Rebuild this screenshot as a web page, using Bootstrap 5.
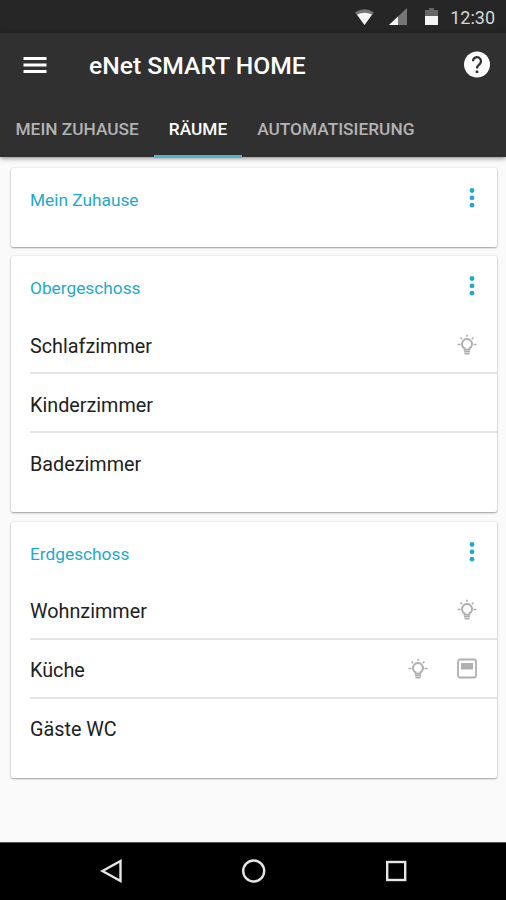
<!DOCTYPE html>
<html lang="de">
<head>
<meta charset="utf-8">
<meta name="viewport" content="width=device-width, initial-scale=1">
<title>eNet SMART HOME</title>
<link rel="stylesheet" href="https://cdn.jsdelivr.net/npm/bootstrap@5.3.0/dist/css/bootstrap.min.css">
<style>
body{font-family:Roboto,"Liberation Sans",sans-serif;background:#fafafa;height:900px;overflow:hidden;color:#212121}
svg{display:block;flex:none}
.status-bar{height:33px;background:#262626;padding-right:11px;color:#d6d6d6;font-size:18px;line-height:33px;padding-top:2px}
.app-head{background:#303030;height:124px;box-shadow:0 1px 5px rgba(0,0,0,.5);position:relative}
.tool-row{height:64px;padding:0 15px 0 23px}
.app-title{font-size:24.7px;font-weight:500;color:#fff;line-height:32px;margin-left:42px;padding-top:1px}
.tab-row{height:61px;padding-left:.5px}
.tab-row .nav-link{color:#b3b3b3;font-size:17.3px;font-weight:500;line-height:26px;padding:19px 15px 0;height:61px;border-bottom:3px solid transparent;white-space:nowrap}
.tab-row .nav-link.active{color:#fff;border-color:#4fb6cc}
.room-list{padding:11px 9px 0 10.5px;gap:9.4px}
.floor-card{border:0;border-radius:2px;background:#fff;box-shadow:0 1px 2px rgba(0,0,0,.35),0 0 2px rgba(0,0,0,.12);height:256px}
.floor-card.short{height:79px}
.floor-head{height:59px;padding:0 20px 0 19.5px}
.floor-name{font-size:17.3px;line-height:24px;color:#1eaac8;padding-top:20px}
.dots{margin-top:19px}
.room{height:59px;margin-left:19.5px;padding:5px 20px 0 0;font-size:19.8px;border-bottom:2px solid #e4e4e4}
.room:last-child{border:0;padding-top:4px}
.icons{gap:29px;margin-top:-3px}
.nav-keys{height:58px;background:#000;border-top:1px solid #555}
</style>
</head>
<body class="d-flex flex-column">
<svg width="0" height="0" class="position-absolute">
<symbol id="bulb" viewBox="0 0 20 22"><g fill="none" stroke="#b0b0b0"><path d="M7.600 15.800V14.400a5 5 0 1 1 4.800 0V15.800Z" stroke-width="1.900"/><path d="M7 17.800h6M7.500 19.800h5" stroke-width="1.600"/><path d="M10 .8v2M3.500 3.500l1.600 1.600M16.500 3.500l-1.600 1.600M.5 10.500h3M16.500 10.500h3" stroke-width="1.600"/></g></symbol>
<symbol id="dots" viewBox="0 0 6 22"><g fill="#1eaac8"><circle cx="3" cy="3.500" r="2.400"/><circle cx="3" cy="10.800" r="2.400"/><circle cx="3" cy="18.200" r="2.400"/></g></symbol>
</svg>
<div class="status-bar d-flex justify-content-end align-items-center flex-shrink-0">
<svg width="70" height="20" viewBox="0 0 70 20"><path d="M0 4.500Q9.500-2 19 4.500L9.500 17Z" fill="#757575"/><path d="M2 6.500Q9.500 3 17 6.500L9.500 17Z" fill="#f5f5f5"/><path d="M52 0V17H34Z" fill="#757575"/><path d="M43 8.500V17H34Z" fill="#f5f5f5"/></svg>
<svg width="13" height="20" viewBox="0 0 13 20"><path d="M0 2H4V0H9V2H13V9H0Z" fill="#666"/><path d="M0 8H13V17H0Z" fill="#f5f5f5"/></svg>
<span class="ms-2 ps-1">12:30</span>
</div>
<header class="app-head flex-shrink-0">
<div class="tool-row d-flex align-items-center">
<svg width="24" height="18" viewBox="0 0 24 18"><path d="M.5 2.500h23M.5 9h23M.5 15.500h23" stroke="#fff" stroke-width="2.800"/></svg>
<div class="app-title">eNet SMART HOME</div>
<svg class="ms-auto" width="28" height="28" viewBox="0 0 28 28"><circle cx="14" cy="13.500" r="13" fill="#fff"/><path d="M10 10.200a4 4 0 1 1 6.500 3.100c-1.500 1.200-2.500 1.900-2.500 4.200" fill="none" stroke="#303030" stroke-width="2.300"/><path d="M12.700 19.500h2.600v2.500h-2.600z" fill="#303030"/></svg>
</div>
<nav class="tab-row nav flex-nowrap">
<a class="nav-link" href="#">MEIN ZUHAUSE</a>
<a class="nav-link active" href="#">RÄUME</a>
<a class="nav-link" href="#">AUTOMATISIERUNG</a>
</nav>
</header>
<main class="room-list d-flex flex-column flex-grow-1">
<section class="floor-card short card"><div class="floor-head d-flex justify-content-between align-items-start"><div class="floor-name">Mein Zuhause</div><svg class="dots" width="10" height="22"><use href="#dots"/></svg></div></section>
<section class="floor-card card"><div class="floor-head d-flex justify-content-between align-items-start"><div class="floor-name">Obergeschoss</div><svg class="dots" width="10" height="22"><use href="#dots"/></svg></div>
<div class="room d-flex align-items-center justify-content-between">Schlafzimmer<span class="icons d-flex"><svg width="20" height="22"><use href="#bulb"/></svg></span></div>
<div class="room d-flex align-items-center">Kinderzimmer</div>
<div class="room d-flex align-items-center">Badezimmer</div></section>
<section class="floor-card card"><div class="floor-head d-flex justify-content-between align-items-start"><div class="floor-name">Erdgeschoss</div><svg class="dots" width="10" height="22"><use href="#dots"/></svg></div>
<div class="room d-flex align-items-center justify-content-between">Wohnzimmer<span class="icons d-flex"><svg width="20" height="22"><use href="#bulb"/></svg></span></div>
<div class="room d-flex align-items-center justify-content-between">Küche<span class="icons d-flex"><svg width="20" height="22"><use href="#bulb"/></svg><svg width="20" height="22" viewBox="0 0 20 22"><rect x="1" y="1.500" width="18" height="18" rx="2" fill="none" stroke="#b0b0b0" stroke-width="1.800"/><path d="M4 5h12v6.500H4z" fill="#b0b0b0"/></svg></span></div>
<div class="room d-flex align-items-center">Gäste WC</div></section>
</main>
<footer class="nav-keys d-flex align-items-center flex-shrink-0">
<svg width="506" height="57" viewBox="0 0 506 57"><g fill="none" stroke="#e6e6e6" stroke-width="2.400"><path d="M102.500 28L120.500 18V38Z"/><circle cx="253.700" cy="28" r="10.500"/><rect x="387.200" y="19" width="18" height="18"/></g></svg>
</footer>
<script src="https://cdn.jsdelivr.net/npm/bootstrap@5.3.0/dist/js/bootstrap.bundle.min.js"></script>
</body>
</html>
